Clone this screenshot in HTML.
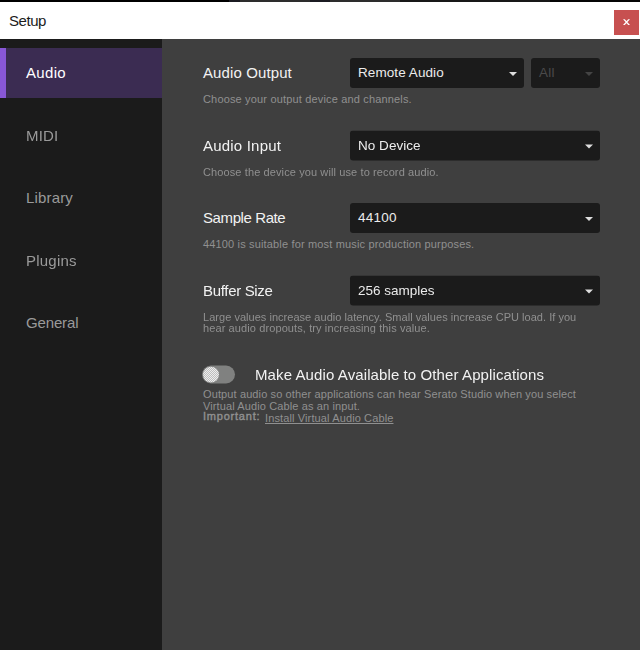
<!DOCTYPE html>
<html><head><meta charset="utf-8">
<style>
*{box-sizing:border-box;margin:0;padding:0}
html,body{width:640px;height:650px;overflow:hidden;background:#3f3f3f;font-family:"Liberation Sans",sans-serif}
#top{position:absolute;left:0;top:0;width:640px;height:2px;background:linear-gradient(to right,#000 0 229px,#1b1b22 229px 240px,#2d2d2d 240px 310px,#1b1b22 310px 330px,#2d2d2d 330px 400px,#181818 400px 550px,#050505 550px)}
#title{position:absolute;left:0;top:2px;width:640px;height:37px;background:#fff}
#title span{position:absolute;left:9px;top:10px;font-size:15px;color:#1c1c1c;line-height:18px}
#close{position:absolute;left:614px;top:8px;width:25px;height:25px;background:#c75050}
#side{position:absolute;left:0;top:39px;width:162px;height:611px;background:#1b1b1b}
#act{position:absolute;left:0;top:9px;width:162px;height:50px;background:#3b2c52}
#act i{position:absolute;left:0;top:0;width:6px;height:50px;background:#8857d6}
.nav{position:absolute;left:26px;font-size:15px;line-height:18px;color:#9a9a9a;white-space:nowrap}
.lbl{position:absolute;left:203px;font-size:15px;line-height:18px;color:#f2f2f2;white-space:nowrap}
.sub{position:absolute;left:203px;font-size:11px;line-height:11px;color:#909090;white-space:nowrap}
.dd{position:absolute;height:30px;background:#1b1b1b;border-radius:3px;color:#ececec;font-size:13.5px;line-height:30px;padding-left:8px;white-space:nowrap}
.dd:after{content:"";position:absolute;right:7px;top:13.5px;border-left:4px solid transparent;border-right:4px solid transparent;border-top:4px solid #dedede}
.dd.dis{color:#4a4a4a}
.dd.dis:after{border-top-color:#444}
.half{position:absolute;left:0;top:0;width:640px;height:0;transform:translateY(-0.5px);will-change:transform}
.hd{transform:translateY(0.5px);will-change:transform}
</style></head><body>
<div id="top"></div>
<div id="title"><span style="letter-spacing:-0.45px">Setup</span><div id="close"><svg width="25" height="25" viewBox="0 0 25 25"><path d="M9 9.2H10.8L16 14.9H14.2Z M14.2 9.2H16L10.8 14.9H9Z" fill="#fff"/></svg></div></div>
<div id="side">
<div id="act"><i></i></div>
<div class="nav" style="letter-spacing:0.33px;top:25px;color:#fff">Audio</div>
<div class="nav hd" style="letter-spacing:0.2px;left:26px;top:87px">MIDI</div>
<div class="nav" style="letter-spacing:0.17px;top:150px">Library</div>
<div class="nav hd" style="letter-spacing:0.22px;top:212px">Plugins</div>
<div class="nav" style="letter-spacing:-0.15px;top:275px">General</div>
</div>

<div class="lbl" style="letter-spacing:0.11px;top:64px">Audio Output</div>
<div class="dd" style="letter-spacing:0.08px;left:350px;top:58px;width:173.5px">Remote Audio</div>
<div class="dd dis" style="letter-spacing:0.3px;left:531px;top:58px;width:69px">All</div>
<div class="sub" style="letter-spacing:0.163px;top:94px">Choose your output device and channels.</div>

<div class="half">
<div class="lbl" style="letter-spacing:0.2px;top:137px">Audio Input</div>
<div class="dd" style="letter-spacing:0.03px;left:350px;top:131px;width:250px">No Device</div>
<div class="sub" style="letter-spacing:0.109px;top:167px">Choose the device you will use to record audio.</div>
</div>

<div class="lbl" style="letter-spacing:-0.4px;top:209px">Sample Rate</div>
<div class="dd" style="letter-spacing:0.25px;left:350px;top:203px;width:250px">44100</div>
<div class="sub" style="letter-spacing:0.158px;top:239px">44100 is suitable for most music production purposes.</div>

<div class="half">
<div class="lbl" style="letter-spacing:-0.32px;top:282px">Buffer Size</div>
<div class="dd" style="left:350px;top:276px;width:250px">256 samples</div>
<div class="sub" style="letter-spacing:0.031px;top:312px">Large values increase audio latency. Small values increase CPU load. If you</div>
<div class="sub" style="letter-spacing:0.105px;top:323px">hear audio dropouts, try increasing this value.</div>
</div>

<svg id="tog" style="position:absolute;left:196px;top:360px" width="46" height="30" viewBox="196 360 46 30"><defs><pattern id="ck" width="2" height="2" patternUnits="userSpaceOnUse"><rect width="2" height="2" fill="#bebebe"/><rect width="1" height="1" fill="#ededed"/><rect x="1" y="1" width="1" height="1" fill="#ededed"/></pattern></defs><rect x="202" y="365.6" width="33" height="17.8" rx="8.95" fill="#808180"/><circle cx="211" cy="374.6" r="7.95" fill="url(#ck)"/></svg>
<div class="lbl hd" style="letter-spacing:0.1px;left:255.3px;top:365px">Make Audio Available to Other Applications</div>
<div class="sub" style="letter-spacing:0.117px;top:389px">Output audio so other applications can hear Serato Studio when you select</div>
<div class="sub" style="letter-spacing:0.117px;top:401px">Virtual Audio Cable as an input.</div>
<div class="sub" style="letter-spacing:0.78px;top:411px;-webkit-text-stroke:0.4px #909090">Important:</div>
<div class="sub" style="letter-spacing:0.123px;left:265px;top:413px"><u>Install Virtual Audio Cable</u></div>
</body></html>
